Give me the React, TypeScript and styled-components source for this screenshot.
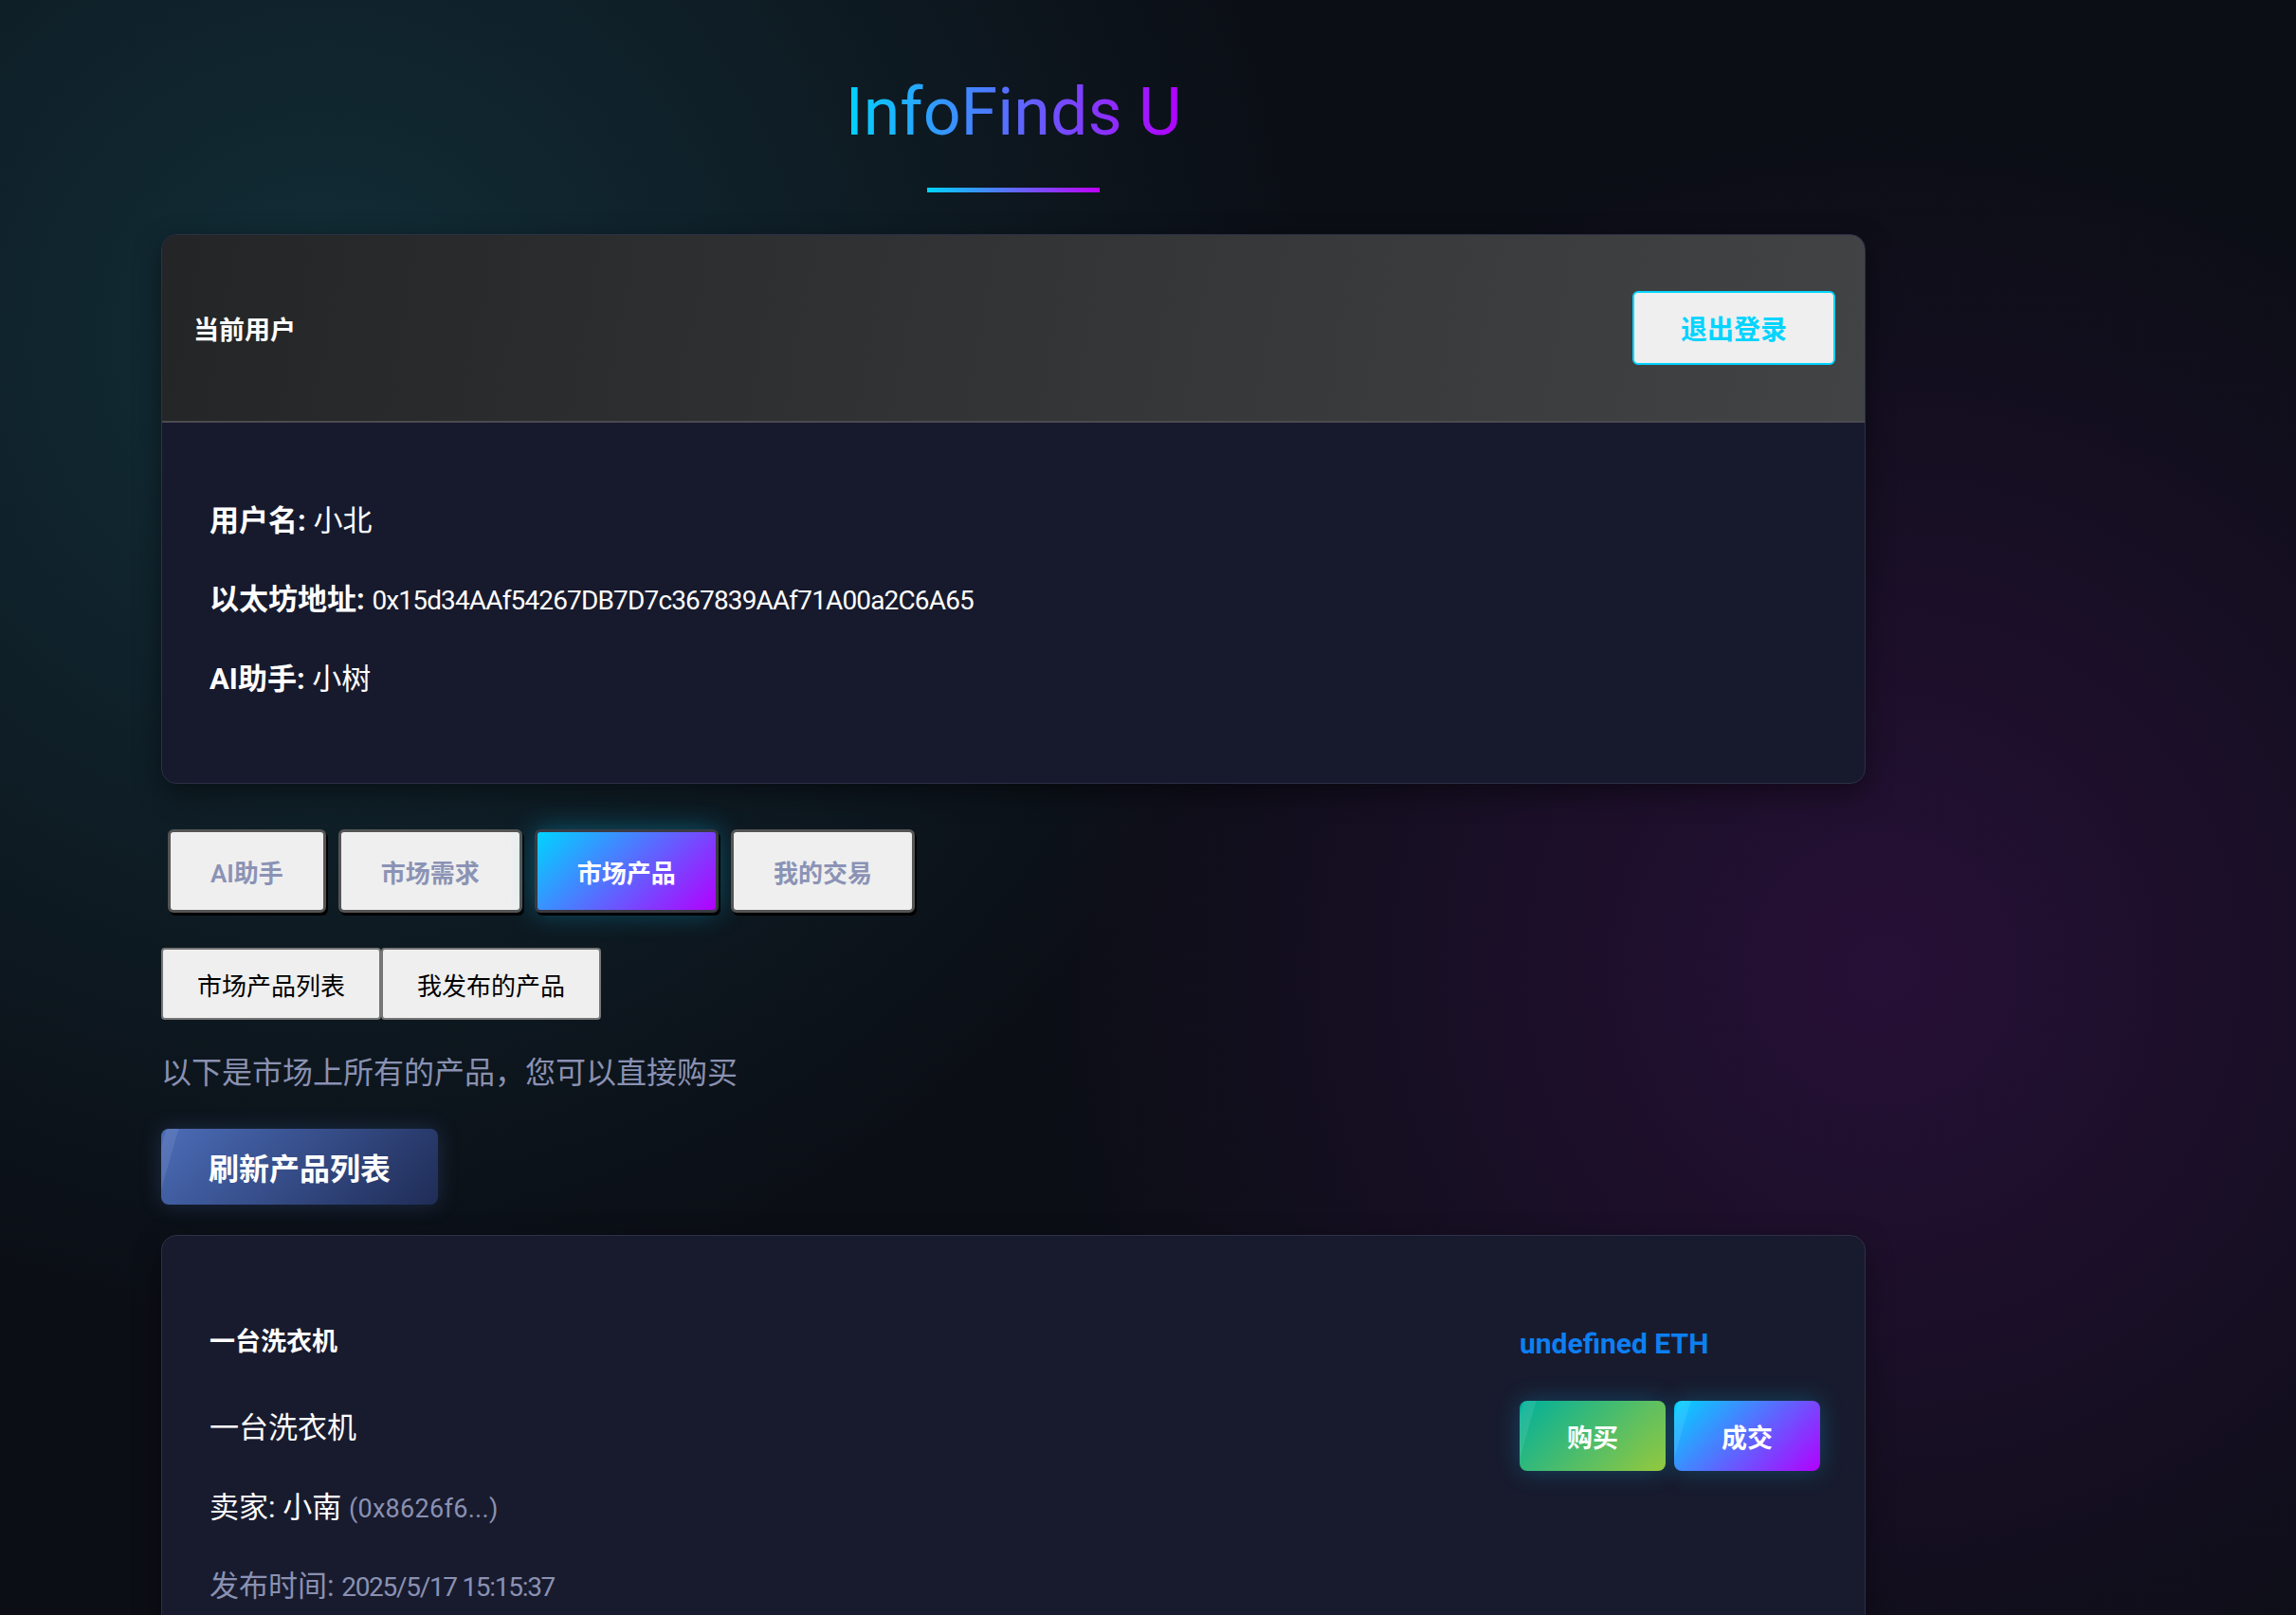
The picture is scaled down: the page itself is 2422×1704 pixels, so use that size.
import React from "react";
import styled, { createGlobalStyle, css } from "styled-components";

const FONT = `"Roboto", "Noto Sans CJK SC", sans-serif`;

const GlobalStyle = createGlobalStyle`
  html, body {
    margin: 0;
    padding: 0;
  }
  body {
    min-height: 100vh;
    font-family: ${FONT};
    color: #ffffff;
    background-color: #0b0e15;
    background-image:
      radial-gradient(circle at 14% 21%, rgba(24, 72, 84, 0.55) 0, rgba(24, 72, 84, 0) 42%),
      radial-gradient(circle at 82% 60%, rgba(66, 18, 88, 0.5) 0, rgba(66, 18, 88, 0) 40%);
    background-attachment: fixed;
  }
  * { box-sizing: border-box; }
`;

const Page = styled.div`
  width: 1968px;
  padding-left: 170px;
  display: flex;
  flex-direction: column;
  padding-bottom: 40px;
`;

const Title = styled.h1`
  margin: 78px 0 0;
  align-self: center;
  font-family: ${FONT};
  font-size: 70px;
  line-height: 80px;
  font-weight: 400;
  background: linear-gradient(90deg, #00d4ff 0%, #b300ff 100%);
  -webkit-background-clip: text;
  background-clip: text;
  color: transparent;
`;

const TitleBar = styled.div`
  align-self: center;
  margin-top: 40px;
  width: 182px;
  height: 5px;
  background: linear-gradient(90deg, #00d4ff, #bf00ff);
`;

const Card = styled.section`
  margin-top: 44px;
  border: 1px solid #2d3046;
  border-radius: 16px;
  background: #171a2d;
  overflow: hidden;
  box-shadow: 0 10px 30px rgba(0, 0, 0, 0.45);
`;

const CardHeader = styled.header`
  height: 198px;
  padding: 0 31px 0 33px;
  display: flex;
  align-items: center;
  justify-content: space-between;
  background: linear-gradient(100deg, #232526 0%, #414345 100%);
  border-bottom: 2px solid #4a4b50;
`;

const HeaderTitle = styled.h2`
  margin: 0;
  font-size: 27px;
  font-weight: 700;
  color: #ffffff;
`;

const LogoutButton = styled.button`
  height: 78px;
  padding: 0 49px;
  border: 2px solid #00d4ff;
  border-radius: 6px;
  background: #efefef;
  color: #00d4ff;
  font-family: ${FONT};
  font-size: 28px;
  font-weight: 600;
  cursor: pointer;
`;

const CardBody = styled.div`
  padding: 77px 50px 83px;
  display: flex;
  flex-direction: column;
  gap: 30px;
`;

const InfoLine = styled.p`
  margin: 0;
  font-size: 31px;
  line-height: 53px;
  color: #ffffff;
`;

const Strong = styled.strong`
  font-weight: 700;
`;

const Mono = styled.span<{ $size: number; $spacing: number }>`
  font-size: ${(p) => p.$size}px;
  letter-spacing: ${(p) => p.$spacing}px;
`;

const TabBar = styled.nav`
  margin-top: 48px;
  padding-left: 7px;
  display: flex;
  gap: 13px;
`;

const Tab = styled.button<{ $active?: boolean }>`
  height: 88px;
  padding: 0 42px;
  border: 3px solid #555555;
  border-radius: 6px;
  font-family: ${FONT};
  font-size: 26px;
  font-weight: 600;
  cursor: pointer;
  background: #efefef;
  color: #8b93b5;
  box-shadow: 2px 3px 0 #000000;
  ${(p) =>
    p.$active &&
    css`
      border-color: #3a3a44;
      background: linear-gradient(135deg, #00d4ff 0%, #b300ff 100%);
      color: #ffffff;
      box-shadow: 2px 3px 0 #000000, 0 0 28px rgba(0, 200, 255, 0.35);
    `}
`;

const SubTabBar = styled.div`
  margin-top: 37px;
  display: flex;
`;

const SubTab = styled.button`
  height: 76px;
  padding: 0 36px;
  border: 2px solid #767676;
  border-radius: 4px;
  background: #efefef;
  color: #000000;
  font-family: ${FONT};
  font-size: 26px;
  font-weight: 400;
  cursor: pointer;
`;

const Hint = styled.p`
  margin: 34px 0 0;
  font-size: 32px;
  line-height: 44px;
  color: #8a91b2;
`;

const GlowButton = styled.button<{ $variant: "refresh" | "buy" | "deal" }>`
  position: relative;
  overflow: hidden;
  border: none;
  color: #ffffff;
  font-family: ${FONT};
  font-weight: 700;
  cursor: pointer;
  border-radius: 8px;
  &::before {
    content: "";
    position: absolute;
    top: 0;
    left: -6px;
    width: 13px;
    height: 100%;
    background: rgba(255, 255, 255, 0.09);
    transform: skewX(-16deg);
  }
  ${(p) =>
    p.$variant === "refresh" &&
    css`
      align-self: flex-start;
      margin-top: 37px;
      height: 80px;
      padding: 0 50px;
      font-size: 32px;
      background: linear-gradient(135deg, #4b6cb7 0%, #1f2c56 100%);
      box-shadow: 0 0 22px rgba(75, 108, 183, 0.28);
    `}
  ${(p) =>
    p.$variant !== "refresh" &&
    css`
      width: 154px;
      height: 74px;
      font-size: 27px;
      box-shadow: 0 0 24px rgba(0, 200, 255, 0.25);
    `}
  ${(p) =>
    p.$variant === "buy" &&
    css`
      background: linear-gradient(135deg, #00b09b 0%, #96c93d 100%);
    `}
  ${(p) =>
    p.$variant === "deal" &&
    css`
      background: linear-gradient(135deg, #00d4ff 0%, #b300ff 100%);
    `}
`;

const ProductCard = styled.article`
  margin-top: 32px;
  border: 1px solid #2d3046;
  border-radius: 16px;
  background: #181b2e;
  padding: 92px 47px 48px 50px;
  display: flex;
  justify-content: space-between;
  align-items: flex-start;
  box-shadow: 0 10px 30px rgba(0, 0, 0, 0.4);
`;

const ProductInfo = styled.div`
  display: flex;
  flex-direction: column;
`;

const ProductName = styled.h3`
  margin: 0;
  font-size: 27px;
  line-height: 40px;
  font-weight: 700;
  color: #ffffff;
`;

const ProductLine = styled.p<{ $muted?: boolean; $gap: number }>`
  margin: ${(p) => p.$gap}px 0 0;
  font-size: 31px;
  line-height: 46px;
  color: ${(p) => (p.$muted ? "#8a91b2" : "#ffffff")};
`;

const Address = styled.span`
  font-size: 27px;
  letter-spacing: 0.3px;
  color: #8a91b2;
`;

const ProductSide = styled.div`
  display: flex;
  flex-direction: column;
  align-items: flex-start;
  padding-top: 2px;
`;

const Price = styled.div`
  font-size: 30px;
  line-height: 40px;
  font-weight: 700;
  letter-spacing: 0;
  color: #0d7ff2;
`;

const ActionRow = styled.div`
  margin-top: 40px;
  display: flex;
  gap: 9px;
`;

export default function App() {
  return (
    <>
      <GlobalStyle />
      <Page>
        <Title>InfoFinds U</Title>
        <TitleBar />

        <Card>
          <CardHeader>
            <HeaderTitle>当前用户</HeaderTitle>
            <LogoutButton>退出登录</LogoutButton>
          </CardHeader>
          <CardBody>
            <InfoLine>
              <Strong>用户名:</Strong> 小北
            </InfoLine>
            <InfoLine>
              <Strong>以太坊地址:</Strong>{" "}
              <Mono $size={28} $spacing={-0.85}>
                0x15d34AAf54267DB7D7c367839AAf71A00a2C6A65
              </Mono>
            </InfoLine>
            <InfoLine>
              <Strong>AI助手:</Strong> 小树
            </InfoLine>
          </CardBody>
        </Card>

        <TabBar>
          <Tab>AI助手</Tab>
          <Tab>市场需求</Tab>
          <Tab $active>市场产品</Tab>
          <Tab>我的交易</Tab>
        </TabBar>

        <SubTabBar>
          <SubTab>市场产品列表</SubTab>
          <SubTab>我发布的产品</SubTab>
        </SubTabBar>

        <Hint>以下是市场上所有的产品，您可以直接购买</Hint>

        <GlowButton $variant="refresh">刷新产品列表</GlowButton>

        <ProductCard>
          <ProductInfo>
            <ProductName>一台洗衣机</ProductName>
            <ProductLine $gap={48}>一台洗衣机</ProductLine>
            <ProductLine $gap={38}>
              卖家: 小南 <Address>(0x8626f6...)</Address>
            </ProductLine>
            <ProductLine $gap={36} $muted>
              发布时间:{" "}
              <Mono $size={28} $spacing={-1.3}>
                2025/5/17 15:15:37
              </Mono>
            </ProductLine>
          </ProductInfo>
          <ProductSide>
            <Price>undefined ETH</Price>
            <ActionRow>
              <GlowButton $variant="buy">购买</GlowButton>
              <GlowButton $variant="deal">成交</GlowButton>
            </ActionRow>
          </ProductSide>
        </ProductCard>
      </Page>
    </>
  );
}
